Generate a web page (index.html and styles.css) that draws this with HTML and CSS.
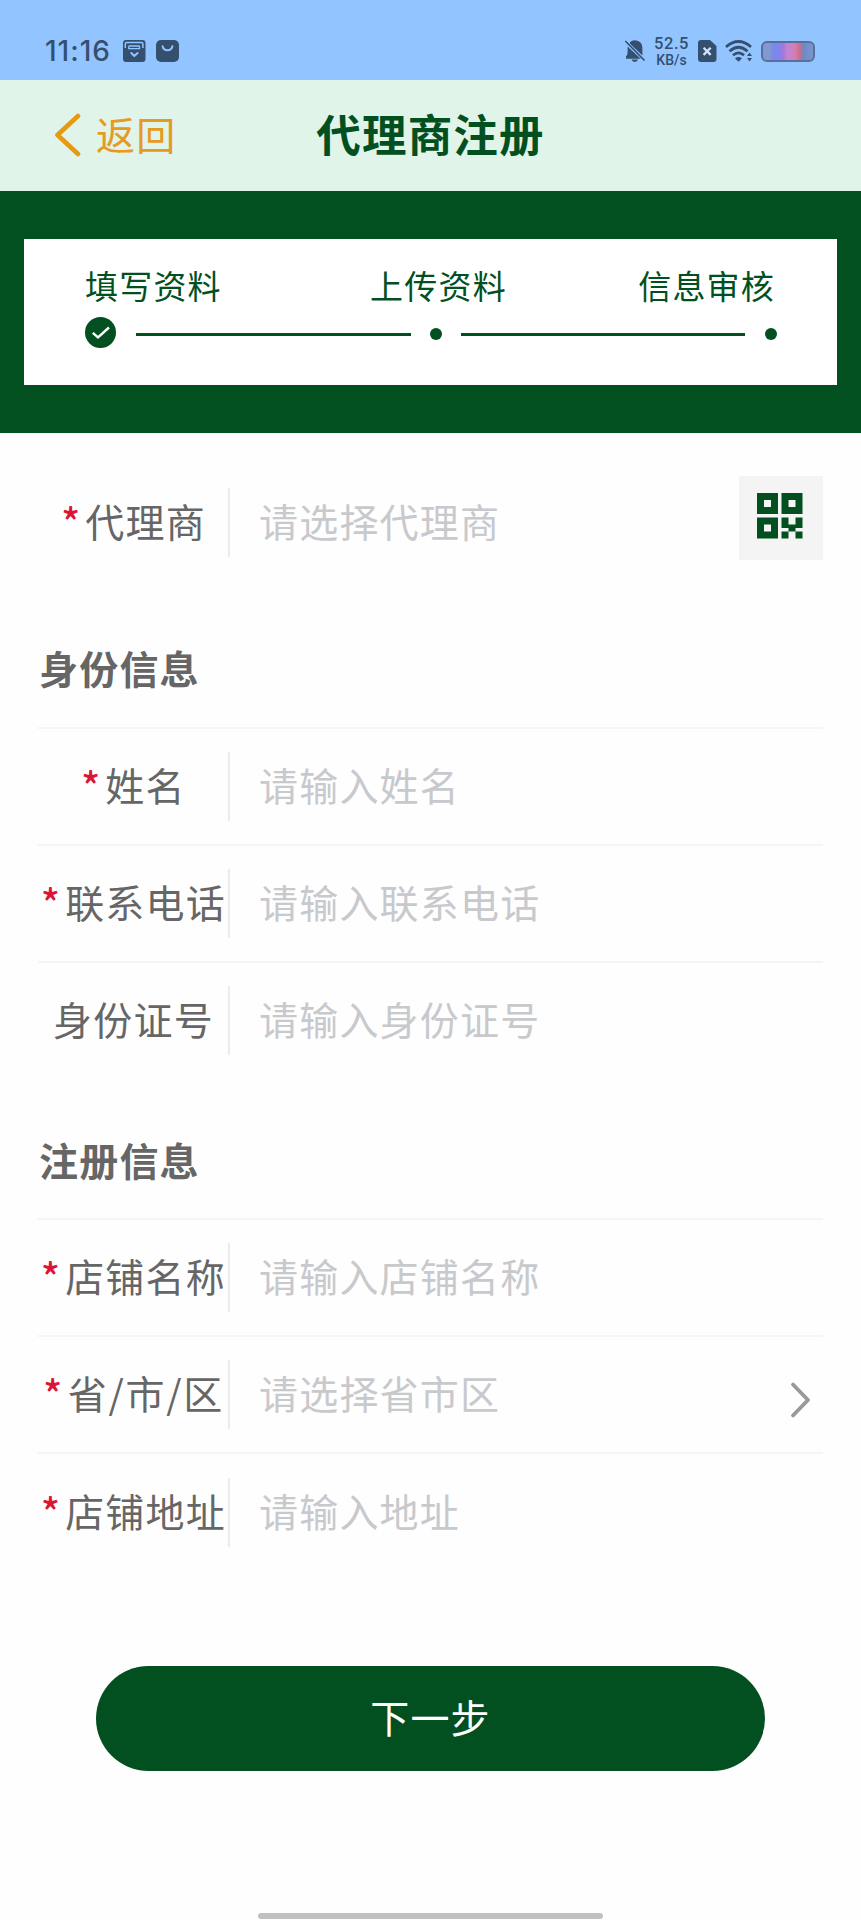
FILE: index.html
```html
<!DOCTYPE html>
<html lang="zh-CN">
<head>
<meta charset="utf-8">
<title>代理商注册</title>
<link rel="stylesheet" href="styles.css">
</head>
<body>
<div class="screen">
  <div class="status">
    <span class="time">11:16</span>
    <svg class="app-icon" width="23" height="22" viewBox="0 0 23 22"><rect width="22.5" height="22" rx="3" fill="#35506f"/><path d="M2.300 8V4Q2.300 2.600 3.700 2.600H18.500Q19.900 2.600 19.900 4V8" fill="none" stroke="#92c5ff" stroke-width="1.500"/><path d="M5.800 8.700V6.800Q5.800 6 6.600 6H15.700Q16.500 6 16.500 6.800V8.700Z" fill="none" stroke="#92c5ff" stroke-width="1.300"/><path d="M8.300 13L11.300 16L14.600 13" fill="none" stroke="#92c5ff" stroke-width="2" stroke-linecap="round" stroke-linejoin="round"/></svg>
    <svg class="app-icon" width="23" height="22" viewBox="0 0 23 22"><rect width="23" height="22" rx="5" fill="#35506f"/><path d="M6.600 6.200Q7.500 10.200 11.500 10.200T16.400 6.200" fill="none" stroke="#92c5ff" stroke-width="2" stroke-linecap="round"/></svg>
    <div class="status-right">
      <svg width="20" height="22" viewBox="0 0 20 22"><path d="M4.500 3.200Q6 .2 10 .2Q17.300 .8 17.400 8V15.400ZM2.600 6.500L15.700 18.700H1V16.500Q2.600 15 2.600 12Z" fill="#35506f"/><path d="M6.500 19.600H13Q12.500 22 9.800 22T6.500 19.600" fill="#35506f"/><path d="M.8 1.500L19 20" stroke="#35506f" stroke-width="1.700" stroke-linecap="round"/></svg>
      <div class="speed"><span class="speed-num">52.5</span><span class="speed-unit">KB/s</span></div>
      <svg width="19" height="22" viewBox="0 0 19 22"><path d="M3 0H12L18.500 6V19Q18.500 22 15.500 22H3Q0 22 0 19V3Q0 0 3 0Z" fill="#35506f"/><path d="M5.600 7.800L12.700 14.900M12.700 7.800L5.600 14.900" stroke="#cfe5ff" stroke-width="2.300"/></svg>
      <svg class="wifi" width="28" height="22" viewBox="0 0 28 22"><g fill="none" stroke="#35506f" stroke-width="2.800"><path d="M1 7Q13.500 -4 26 7"/><path d="M4.500 11.300Q13.500 3.200 22.500 11.300"/><path d="M8 15.300Q13.500 10.500 19 15.300"/></g><path d="M10 18.500Q13.500 15.700 17 18.500L13.500 21.800Z" fill="#35506f"/><path d="M24.500 12.500L27 16H22ZM24.500 21.500L22 18H27Z" fill="#35506f"/></svg>
      <div class="battery"></div>
    </div>
  </div>

  <header class="header">
    <a class="back"><svg width="27" height="44" viewBox="0 0 27 44"><path d="M24 3L3.500 22L24 41" fill="none" stroke="#e69a12" stroke-width="4.600" stroke-linecap="round" stroke-linejoin="round"/></svg><span class="back-text">返回</span></a>
    <h1 class="title">代理商注册</h1>
  </header>

  <section class="progress">
    <div class="steps">
      <div class="step-names"><span>填写资料</span><span class="step-mid">上传资料</span><span>信息审核</span></div>
      <div class="track">
        <svg class="done" width="31" height="31" viewBox="0 0 31 31"><circle cx="15.500" cy="15.500" r="15.500" fill="#02501f"/><path d="M7.800 15.800L13 20.500L24 10.500" fill="none" stroke="#fff" stroke-width="2.400"/></svg>
        <i class="line line-first"></i><i class="dot"></i><i class="line line-second"></i><i class="dot"></i>
      </div>
    </div>
  </section>

  <main class="form">
    <div class="row row-agent"><label class="label"><b class="star">*</b>代理商</label><span class="field">请选择代理商</span>
      <span class="scan"><svg width="46" height="46" viewBox="0 0 46 46"><path fill="#02501f" fill-rule="evenodd" d="M0 0H21V21H0ZM7 7V14H14V7ZM24.500 0H45.500V21H24.500ZM31.500 7V14H38.500V7ZM0 24.500H21V45.500H0ZM7 31.500V38.500H14V31.500ZM24.500 24.500H31.500V31.500H38.500V24.500H45.500V35H38.500V38.500H45.500V45.500H38.500V38.500H31.500V45.500H24.500V38.500H31.500V35H24.500Z"/></svg></span>
    </div>

    <h2 class="section">身份信息</h2>
    <div class="row"><label class="label"><b class="star">*</b>姓名</label><span class="field">请输入姓名</span></div>
    <div class="row"><label class="label"><b class="star">*</b>联系电话</label><span class="field">请输入联系电话</span></div>
    <div class="row"><label class="label">身份证号</label><span class="field">请输入身份证号</span></div>

    <h2 class="section section-reg">注册信息</h2>
    <div class="row"><label class="label"><b class="star">*</b>店铺名称</label><span class="field">请输入店铺名称</span></div>
    <div class="row"><label class="label label-region"><b class="star">*</b>省/市/区</label><span class="field">请选择省市区</span><svg class="arrow" width="21" height="38" viewBox="0 0 21 38"><path d="M3 3.500L18 19L3 34.500" fill="none" stroke="#999" stroke-width="3.800" stroke-linecap="round" stroke-linejoin="round"/></svg></div>
    <div class="row"><label class="label"><b class="star">*</b>店铺地址</label><span class="field">请输入地址</span></div>

    <button class="next">下一步</button>
  </main>
  <div class="home-bar"></div>
</div>
</body>
</html>
```
FILE: styles.css
```css
* { box-sizing: border-box; }
body {
  margin: 0;
  background: #fefefe;
  font-family: "Noto Sans CJK SC", sans-serif;
  color: #666;
}
.screen {
  width: 861px;
  height: 1920px;
  display: flex;
  flex-direction: column;
  overflow: hidden;
}
.status {
  flex: none;
  height: 80px;
  padding: 22px 46px 0 45px;
  background: #92c5ff;
  color: #35506f;
  display: flex;
  align-items: center;
}
.time {
  width: 77.500px;
  font: 500 28px/30px Inter, sans-serif;
  letter-spacing: 1px;
}
.app-icon { margin-right: 10px; }
.status-right {
  margin-left: auto;
  display: flex;
  align-items: center;
}
.speed {
  width: 34px;
  margin: 0 9.500px 0 10px;
  display: flex;
  flex-direction: column;
  align-items: center;
  font-family: Roboto, sans-serif;
  font-weight: 500;
}
.speed-num { font-size: 16.500px; line-height: 17px; letter-spacing: 0.6px; }
.speed-unit { font-size: 14px; line-height: 16px; }
.wifi { margin: 0 8px 0 8px; }
.battery {
  width: 54px;
  height: 21px;
  border: 2px solid #586f9c;
  border-radius: 6px;
  background: linear-gradient(90deg, #8099cf 0 14%, #7b86ee 20% 30%, #a078d8 40%, #c583cf 48% 56%, #d77bb0 64%, #cc6d84 74%, #6f87c4 80%, #7698cd);
}
.header {
  flex: none;
  height: 111px;
  padding: 0 54px;
  background: #e0f4e9;
  display: grid;
  grid-template-columns: 1fr auto 1fr;
  align-items: center;
}
.back {
  display: flex;
  align-items: center;
  gap: 15px;
  margin-top: -2px;
  color: #e69a22;
  font-size: 39px;
  letter-spacing: 1.200px;
  line-height: 50px;
}
.back-text { padding-bottom: 4px; }
.title {
  margin: 0;
  padding-bottom: 5px;
  color: #02501f;
  font-size: 44.500px;
  line-height: 60px;
  letter-spacing: 1.200px;
  font-weight: 700;
}
.progress {
  flex: none;
  height: 242px;
  padding: 48px 24px;
  background: #02501f;
}
.steps {
  height: 146px;
  padding: 24px 60px 0 61px;
  background: #fff;
  color: #02501f;
}
.step-names {
  display: flex;
  justify-content: space-between;
  padding-right: 2px;
  font-size: 33px;
  line-height: 44px;
  letter-spacing: 1.200px;
}
.step-mid { margin-left: 17px; }
.track {
  margin-top: 10px;
  height: 31px;
  display: flex;
  align-items: center;
}
.done { margin-right: 20px; }
.line {
  height: 3px;
  margin-top: 4px;
  background: #02501f;
}
.line-first { width: 275px; margin-right: 19px; }
.line-second { width: 284px; margin: 4px 20px 0 19px; }
.dot {
  width: 12px;
  height: 12px;
  margin-top: 2px;
  border-radius: 50%;
  background: #02501f;
}
.form {
  flex: 1;
  padding: 30px 38px 0;
}
.row {
  height: 117.200px;
  border-top: 2px solid #f5f5f5;
  display: flex;
  align-items: center;
  font-size: 39px;
  line-height: 50px;
  letter-spacing: 1.200px;
}
.row-agent {
  height: 116px;
  border-top-color: transparent;
}
.label {
  width: 192px;
  height: 69px;
  padding: 0 0 5px 1px;
  border-right: 2px solid #ececec;
  display: flex;
  align-items: center;
  justify-content: center;
  white-space: nowrap;
}
.label-region { letter-spacing: 1.700px; }
.star {
  margin-right: 4px;
  color: #dc1436;
  font-weight: 500;
}
.field {
  flex: 1;
  padding: 0 0 5px 29px;
  color: #c8c9cc;
}
.scan {
  width: 84px;
  height: 84px;
  margin-top: -8px;
  padding: 17px 0 0 18px;
  background: #f4f4f4;
}
.scan svg, .arrow { display: block; }
.arrow { margin: 10px 12px 0 0; }
.section {
  height: 148px;
  margin: 0;
  padding: 63px 0 0 1px;
  font-size: 39px;
  line-height: 50px;
  letter-spacing: 1.200px;
  font-weight: 700;
}
.section-reg { height: 139.500px; padding-top: 55px; }
.next {
  display: block;
  width: 669px;
  height: 105px;
  margin: 96px 0 0 58px;
  padding: 0 0 5px;
  border: 0;
  border-radius: 53px;
  background: #02501f;
  color: #fff;
  font: 39px/50px "Noto Sans CJK SC", sans-serif;
  letter-spacing: 1.200px;
}
.home-bar {
  flex: none;
  width: 345px;
  height: 6px;
  margin: 0 0 1px 258px;
  border-radius: 3px;
  background: #c1c1c1;
}
```
